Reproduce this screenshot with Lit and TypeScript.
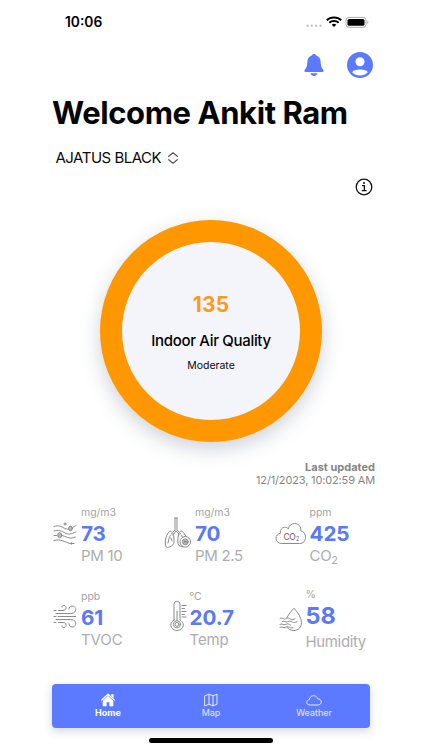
import { LitElement, html, css, svg, TemplateResult } from "lit";
import { customElement, property } from "lit/decorators.js";
import { classMap } from "lit/directives/class-map.js";

interface Metric {
  id: string;
  unit: string;
  value: string;
  label: string;
  sub?: string;
}

const METRICS: Metric[] = [
  { id: "pm10", unit: "mg/m3", value: "73", label: "PM 10" },
  { id: "pm25", unit: "mg/m3", value: "70", label: "PM 2.5" },
  { id: "co2", unit: "ppm", value: "425", label: "CO", sub: "2" },
  { id: "tvoc", unit: "ppb", value: "61", label: "TVOC" },
  { id: "temp", unit: "°C", value: "20.7", label: "Temp" },
  { id: "humidity", unit: "%", value: "58", label: "Humidity" },
];

const GLYPHS: Record<string, TemplateResult> = {
  pm10: html`<svg width="24" height="24" viewBox="0 0 24 24">
    <path d="M1 4.500C6 2.500 9 5 12 6.500S18 6.500 23 3.500M1 9C5 7.500 9 9 12 11S18 12 23 10M1 13.500H3.500M9 13.500C13 14 16 18 22.500 15M1 18.500C8 16 12 21 18 21.500H21"/>
    <ellipse cx="17.500" cy="6.500" rx="1.900" ry="2.300" class="shade"/><ellipse cx="6.700" cy="13.200" rx="2" ry="2.500" class="shade"/>
    <circle cx="12" cy="2" r="1"/><circle cx="18.500" cy="21.500" r=".7"/>
  </svg>`,
  pm25: html`<svg width="28" height="32" viewBox="0 0 28 32">
    <path d="M11 1V13L7.500 16.500M13 1V13L16.500 16.500M11 1H13M12 14L9 18M12 14L15 17"/>
    <path d="M9.500 18C8.500 14 6.500 12.800 4.500 15.500C2 19 1 23 1.300 27C1.500 31 4 31 6.500 29.500C9 28 10.500 27 10 23Z"/>
    <path d="M14.500 18C15.500 14 17.500 12.800 19.500 15.500L22 19.500M14.500 18C13.500 22 13.300 26.500 15 28.500L19 30"/>
    <path d="M7 18C4.500 20 5 23 4 26M7 21L8 24M17 18L18.500 20"/>
    <circle cx="21.300" cy="24.800" r="5.300"/><circle cx="21.300" cy="24.800" r="2.900" class="shade"/><circle cx="21.300" cy="24.800" r=".8"/>
  </svg>`,
  co2: html`<svg width="32" height="24" viewBox="0 0 32 24">
    <path d="M6.500 21.500C3 21.500 1 19 1 16.300C1 13.600 3 11.600 5.500 11.200C4.800 7.500 7.500 5 10.300 5.300C11.700 5.400 12.700 6 13.300 6.900C14 3.500 16.500 1.500 19.500 1.500C23.500 1.500 26.300 4.800 25.800 9C28.900 9.500 30.500 12 30.500 15.200C30.500 19 28.300 21.500 25 21.500Z"/>
    <text x="8.600" y="18" class="co">CO</text><text x="20.900" y="19" class="two">2</text>
  </svg>`,
  tvoc: html`<svg width="24" height="25" viewBox="0 0 24 25">
    <path d="M1 6.500H3M5.500 6.500H10C14 6.500 14 1.500 10.800 1.500C9.500 1.500 8.800 2.300 8.800 3.200M3 9.500H17.500C24.500 9.500 24 2 19 2C17 2 15.800 3.500 16 5M1 12.500H3M5 12.500H22.500M3 15.500H17.500C24.500 15.500 24 23 19 23C17 23 15.800 21.500 16 20M1 18.500H3M5.500 18.500H10C14 18.500 14 23.500 10.800 23.500C9.500 23.500 8.800 22.700 8.800 21.800"/>
  </svg>`,
  temp: html`<svg width="18" height="32" viewBox="0 0 18 32">
    <path d="M4 20V4.500C4 .2 10 .2 10 4.500V20C13.500 22 14.200 25.500 12 28.300C9.500 31.300 4.500 31.300 2 28.300C-.2 25.500 .5 22 4 20Z"/>
    <circle cx="7" cy="24.300" r="3.600"/><circle cx="7" cy="24.300" r="1.900"/><path d="M7 20.500V11M12 5.500H16M12 8.500H14.500M12 11.500H16M12 14.500H14.500M12 17H16"/>
  </svg>`,
  humidity: html`<svg width="24" height="25" viewBox="0 0 24 25">
    <path d="M8 10.500C10 7 12.500 3.500 15 1.200C18.500 5 22.500 10.800 22.500 15.500C22.500 20.500 19 23.500 15 23.500C12 23.500 9.500 22.300 8.200 20.500"/>
    <path d="M1 11.700C3 9.500 4.500 13 6.500 11.700S10 11 11.500 12.200S15 12.500 16 11.700M3 14.700C5 13 6.500 16 8.500 14.700S12 14.500 13.500 15.200S16 15.500 18 14.700M1 17.300C3 16 4.500 18.700 6.500 17.500S10 17 11.500 18M1 20.300C3 19 4.500 21.500 6.500 20.300S10 20 11.500 20.800H14"/>
  </svg>`,
};

@customElement("metric-tile")
export class MetricTile extends LitElement {
  @property({ attribute: false }) metric!: Metric;

  static styles = css`
    :host { display: block; font-family: Inter, sans-serif; }
    .tile { display: grid; align-items: start; }
    .icon { display: flex; padding-top: 18px; }
    .pm10 { grid-template-columns: 28px auto; }
    .pm25 { grid-template-columns: 31px auto; }
    .pm25 .icon { padding-top: 13px; }
    .co2 { grid-template-columns: 34.500px auto; }
    .tvoc { grid-template-columns: 28px auto; }
    .tvoc .icon { padding-top: 16.500px; }
    .temp { grid-template-columns: 20px auto; padding-left: 5.500px; }
    .temp .icon { padding-top: 12.500px; }
    .humidity { grid-template-columns: 27px auto; padding-left: 3.500px; }
    .humidity .icon { padding-top: 19.500px; }
    svg { display: block; fill: none; stroke: #8a8a8a; stroke-width: 1; stroke-linecap: round; stroke-linejoin: round; overflow: visible; }
    .shade { fill: #bcbcbc; }
    .co, .two { fill: #777; stroke: none; font-weight: 500; font-size: 8.500px; letter-spacing: -0.6px; }
    .two { font-size: 5.500px; }
    .text { display: flex; flex-direction: column; white-space: nowrap; }
    .unit { font-size: 10.500px; line-height: 18px; color: #a3a3a3; letter-spacing: -0.05px; }
    .value { font-size: 20.700px; line-height: 23px; margin-bottom: 2px; font-weight: 700; color: #5b78f6; letter-spacing: -0.1px; }
    .label { font-size: 15px; line-height: 18px; color: #adadad; letter-spacing: -0.3px; }
    .tvoc .label, .temp .label { letter-spacing: -0.1px; }
    .sub { font-size: 11px; line-height: 0; position: relative; top: 3px; }
    .humidity .unit { line-height: 13px; }
    .humidity .value { font-size: 23.500px; line-height: 30px; margin-bottom: 1px; }
    .humidity .label { line-height: 20px; letter-spacing: -0.35px; }
  `;

  render() {
    const m = this.metric;
    return html`<div class="tile ${m.id}">
      <div class="icon">${GLYPHS[m.id]}</div>
      <div class="text">
        <span class="unit">${m.unit}</span>
        <span class="value">${m.value}</span>
        <span class="label">${m.label}${m.sub ? html`<span class="sub">${m.sub}</span>` : ""}</span>
      </div>
    </div>`;
  }
}

@customElement("app-root")
export class AppRoot extends LitElement {
  static styles = css`
    :host { display: block; font-family: Inter, sans-serif; color: #0a0a0a; }
    * { box-sizing: border-box; }
    svg { display: block; }
    .screen { width: 422px; height: 750px; background: #fff; display: flex; flex-direction: column; overflow: hidden; white-space: nowrap; }
    .status { height: 44px; padding: 0 53px 0 65px; display: flex; justify-content: space-between; align-items: center; }
    .time { font-size: 13.800px; font-weight: 600; line-height: 20px; color: #000; }
    .actions { height: 42px; display: flex; justify-content: flex-end; align-items: center; gap: 22px; padding-right: 48px; }
    .title { margin: 0; height: 54px; line-height: 54px; padding-left: 52px; font-size: 31px; font-weight: 700; letter-spacing: -0.420px; color: #050505; }
    .place { height: 35px; display: flex; align-items: center; gap: 7px; padding-left: 55.500px; font-size: 15px; letter-spacing: -0.5px; }
    .info { height: 25px; display: flex; justify-content: flex-end; align-items: center; padding: 0 49px 1px 0; }
    .gauge { width: 222px; height: 222px; margin: 20px 0 0 100px; flex: none; border: 22px solid #ff9800; border-radius: 50%; background: #f3f5fa; box-shadow: 0 7px 20px rgba(70, 90, 110, 0.27); display: flex; flex-direction: column; align-items: center; padding-top: 48px; }
    .score { font-size: 21px; line-height: 30px; font-weight: 700; color: #fb9b1e; letter-spacing: 0.2px; }
    .caption { font-size: 15px; line-height: 20px; font-weight: 500; margin-top: 11px; letter-spacing: -0.320px; color: #000; }
    .level { font-size: 10.500px; line-height: 14px; margin-top: 8px; letter-spacing: 0; }
    .updated { margin: 19px 47px 0 0; display: flex; flex-direction: column; text-align: right; font-size: 11px; line-height: 13px; color: #858585; }
    .strong { font-weight: 700; }
    .stamp { letter-spacing: -0.150px; }
    .metrics { display: grid; grid-template-columns: 111px 111px 111px; grid-template-rows: 83.500px 83px; padding-left: 53px; margin-top: 17px; }
    .nav { width: 318px; height: 44px; flex: none; margin: 13.500px 0 0 52px; border-radius: 4px; background: #5c7aff; box-shadow: 0 3px 10px rgba(60, 70, 100, 0.22); display: grid; grid-template-columns: 112px 94px 112px; }
    .tab { display: flex; flex-direction: column; align-items: center; padding-top: 9px; color: #e6eaff; font-size: 9px; line-height: 12px; }
    .active { color: #fff; font-weight: 700; }
    .homebar { width: 124px; height: 5px; flex: none; border-radius: 3px; background: #000; margin: 10px 0 0 149px; }
  `;

  private tab(name: string, icon: TemplateResult, active = false) {
    return html`<div class=${classMap({ tab: true, active })}>
      <svg width="16" height="14" viewBox="0 0 16 14" fill="none" stroke="currentColor" stroke-width="1" stroke-linejoin="round" stroke-linecap="round">${icon}</svg>
      <span>${name}</span>
    </div>`;
  }

  render() {
    return html`<div class="screen">
      <div class="status">
        <span class="time">10:06</span>
        <svg width="64" height="14" viewBox="0 0 64 14">
          <g fill="#c4c4c4"><circle cx="2.500" cy="10.800" r="1.200"/><circle cx="6.800" cy="10.800" r="1.200"/><circle cx="11.200" cy="10.800" r="1.200"/><circle cx="15.500" cy="10.800" r="1.200"/></g>
          <g fill="none" stroke="#000" stroke-width="2"><path d="M21.800 5.200C25.500 1.500 32.500 1.500 36.200 5.200"/><path d="M24.300 7.800C26.700 5.500 31.300 5.500 33.700 7.800"/></g>
          <path d="M26.700 9.700Q29 8 31.300 9.700L29 12Z" fill="#000"/>
          <rect x="41" y="2.400" width="20" height="9.900" rx="3" fill="none" stroke="#aaa"/><rect x="42.500" y="3.900" width="17" height="6.900" rx="1.600" fill="#000"/><path d="M62.300 5.700Q64.500 7.300 62.300 9Z" fill="#aaa"/>
        </svg>
      </div>
      <div class="actions">
        <svg width="20" height="24" viewBox="0 0 20 24" fill="#5c7aff">
          <path d="M10 1C8.700 1 8 1.700 7.800 2.500C4.800 3.300 3.500 5.700 3.400 8.500C3.200 13 2.500 14.500 1 16.500C-.1 18 .5 19 2 19H18C19.500 19 20.100 18 19 16.500C17.500 14.500 16.800 13 16.600 8.500C16.500 5.700 15.200 3.300 12.200 2.500C12 1.700 11.300 1 10 1ZM6.500 20.300H13.500C13 22 11.800 23 10 23S7 22 6.500 20.300Z"/>
        </svg>
        <svg width="28" height="28" viewBox="0 0 28 28">
          <circle cx="14" cy="14" r="13" fill="#5c7aff"/><circle cx="14" cy="10.800" r="4.500" fill="#fff"/><path d="M6.200 21.200C7.500 17.500 20.500 17.500 21.800 21.200C17.500 25.500 10.500 25.500 6.200 21.200Z" fill="#fff"/>
        </svg>
      </div>
      <h1 class="title">Welcome Ankit Ram</h1>
      <div class="place"><span>AJATUS BLACK</span>
        <svg width="10" height="12" viewBox="0 0 10 12" fill="none" stroke="#555" stroke-width="1.200" stroke-linecap="round" stroke-linejoin="round"><path d="M.7 4.300L5 .8L9.300 4.300M.7 7.700L5 11.200L9.300 7.700"/></svg>
      </div>
      <div class="info">
        <svg width="18" height="18" viewBox="0 0 18 18" fill="none" stroke="#111" stroke-width="1.300"><circle cx="9" cy="9" r="7.800"/><path d="M7 7.700H9.400V12.600M6.800 12.700H11.600"/><circle cx="9" cy="5" r="1" fill="#111" stroke="none"/></svg>
      </div>
      <div class="gauge">
        <span class="score">135</span><span class="caption">Indoor Air Quality</span><span class="level">Moderate</span>
      </div>
      <div class="updated"><span class="strong">Last updated</span><span class="stamp">12/1/2023, 10:02:59 AM</span></div>
      <div class="metrics">${METRICS.map((m) => html`<metric-tile .metric=${m}></metric-tile>`)}</div>
      <div class="nav">
        ${this.tab("Home", svg`<path d="M1.700 7L8 1.300L14.300 7" stroke-width="1.300"/><path d="M11.500 1.500H13.300V4.500L11.500 3Z M8 3.200L13 7.700V13H9.700V9H6.300V13H3V7.700Z" fill="currentColor" stroke-width=".6"/>`, true)}
        ${this.tab("Map", svg`<path d="M2 2.800L6 1.200L10 2.800L14 1.200V11.200L10 12.800L6 11.200L2 12.800ZM6 1.200V11.200M10 2.800V12.800"/>`)}
        ${this.tab("Weather", svg`<path d="M4 12C2 12 .8 10.900 .8 9.300C.8 7.800 1.900 6.800 3.400 6.600C3.600 4.300 5.200 2.700 7.600 2.700C9.700 2.700 11.200 3.900 11.700 5.800C13.900 5.900 15.200 7.200 15.200 9C15.200 10.800 13.900 12 12 12Z"/>`)}
      </div>
      <div class="homebar"></div>
    </div>`;
  }
}
